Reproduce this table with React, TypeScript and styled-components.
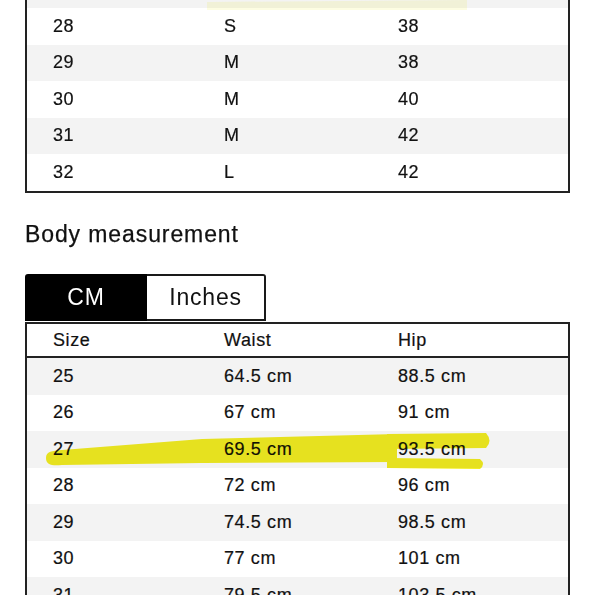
import styled, { createGlobalStyle } from "styled-components";

const GlobalStyle = createGlobalStyle`
  body {
    margin: 0;
    background: #ffffff;
    color: #111111;
    font-family: "Liberation Sans", Arial, sans-serif;
  }
`;

const Page = styled.div`
  width: 545px;
  padding: 0 25px;
  margin-top: -30.5px;
`;

const SizeTable = styled.div`
  position: relative;
  border: 2px solid #222222;
  background: #ffffff;
`;

const Row = styled.div<{ $striped?: boolean }>`
  display: grid;
  grid-template-columns: 171px 174px 1fr;
  align-items: center;
  height: 36.5px;
  padding-left: 26px;
  background: ${(p) => (p.$striped ? "#f3f3f3" : "#ffffff")};
  font-size: 18px;
  letter-spacing: 0.6px;
  -webkit-text-stroke: 0.2px #111111;
`;

const HeaderRow = styled(Row)`
  height: 32px;
  border-bottom: 2px solid #222222;
  background: #ffffff;
`;

const Heading = styled.h2`
  margin: 28px 0 27.5px;
  font-size: 23px;
  line-height: 26px;
  font-weight: 400;
  letter-spacing: 0.9px;
  -webkit-text-stroke: 0.25px #111111;
`;

const Tabs = styled.div`
  display: flex;
  height: 47px;
`;

const Tab = styled.button<{ $active?: boolean; $width: number }>`
  width: ${(p) => p.$width}px;
  height: 100%;
  padding: 0;
  font-family: inherit;
  font-size: 23px;
  letter-spacing: 0.8px;
  border: 2px solid ${(p) => (p.$active ? "#000000" : "#1a1a1a")};
  background: ${(p) => (p.$active ? "#000000" : "#ffffff")};
  color: ${(p) => (p.$active ? "#ffffff" : "#111111")};
  &:first-child {
    border-top-left-radius: 3px;
  }
  &:last-child {
    border-left: none;
    border-top-right-radius: 3px;
  }
`;

const BodyTable = styled(SizeTable)`
  margin-top: 1px;
  border-bottom: none;
`;

const Marker = styled.svg`
  position: absolute;
  left: 0;
  top: 0;
  width: 545px;
  height: 200px;
  overflow: visible;
  pointer-events: none;
  mix-blend-mode: multiply;
`;

const garment = [
  ["", "", ""],
  ["28", "S", "38"],
  ["29", "M", "38"],
  ["30", "M", "40"],
  ["31", "M", "42"],
  ["32", "L", "42"],
];

const body = [
  ["25", "64.5 cm", "88.5 cm"],
  ["26", "67 cm", "91 cm"],
  ["27", "69.5 cm", "93.5 cm"],
  ["28", "72 cm", "96 cm"],
  ["29", "74.5 cm", "98.5 cm"],
  ["30", "77 cm", "101 cm"],
  ["31", "79.5 cm", "103.5 cm"],
];

export default function App() {
  return (
    <>
      <GlobalStyle />
      <Page>
        <SizeTable>
          {garment.map((r, i) => (
            <Row key={i} $striped={i % 2 === 0}>
              <span>{r[0]}</span>
              <span>{r[1]}</span>
              <span>{r[2]}</span>
            </Row>
          ))}
          <Marker viewBox="0 0 545 200">
            <path d="M180,30 L440,28 L440,38 L180,38 Z" fill="#f2ee10" opacity="0.12" />
          </Marker>
        </SizeTable>

        <Heading>Body measurement</Heading>

        <Tabs>
          <Tab $active $width={122}>CM</Tab>
          <Tab $width={119}>Inches</Tab>
        </Tabs>

        <BodyTable>
          <HeaderRow>
            <span>Size</span>
            <span>Waist</span>
            <span>Hip</span>
          </HeaderRow>
          {body.map((r, i) => (
            <Row key={r[0]} $striped={i % 2 === 0}>
              <span>{r[0]}</span>
              <span>{r[1]}</span>
              <span>{r[2]}</span>
            </Row>
          ))}
          <Marker viewBox="0 0 545 200">
            <g fill="#f1ec0e" opacity="0.92">
              <path d="M19,134 C19,127 25,127 35,126 L175,115 L370,110 L370,138 L175,139 L35,141 C25,142 19,141 19,134 Z" />
              <path d="M360,110 L459,109 Q466,117 459,124 L360,125 Z" />
              <path d="M360,134 L453,135 Q459,140 453,145 L360,144 Z" />
            </g>
          </Marker>
        </BodyTable>
      </Page>
    </>
  );
}
